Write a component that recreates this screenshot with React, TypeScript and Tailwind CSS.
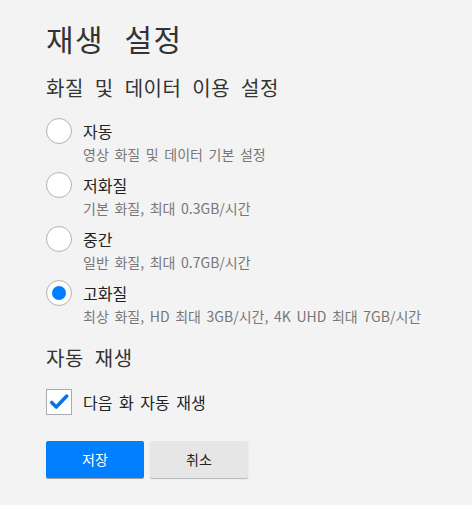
import { useState } from "react";

const qualities = [
  { id: "auto", label: "자동", desc: "영상 화질 및 데이터 기본 설정" },
  { id: "low", label: "저화질", desc: "기본 화질, 최대 0.3GB/시간" },
  { id: "medium", label: "중간", desc: "일반 화질, 최대 0.7GB/시간" },
  {
    id: "high",
    label: "고화질",
    desc: "최상 화질, HD 최대 3GB/시간, 4K UHD 최대 7GB/시간",
  },
];

export default function App() {
  const [quality, setQuality] = useState("high");
  const [autoplay, setAutoplay] = useState(true);

  return (
    <div
      className="min-h-screen bg-[#f3f3f3] pl-[46px] pt-[18px] text-[#333]"
      style={{ fontFamily: '"Noto Sans CJK KR", "Noto Sans", sans-serif' }}
    >
      <h1 className="text-[30px] leading-[40px] font-normal tracking-[1.5px] [word-spacing:12px]">
        재생 설정
      </h1>

      <h2 className="mt-[16px] text-[20px] leading-[28px] font-normal tracking-[0.5px] [word-spacing:6px]">
        화질 및 데이터 이용 설정
      </h2>

      <div className="mt-4">
        {qualities.map((q) => (
          <label
            key={q.id}
            className="flex h-[54px] cursor-pointer items-start"
          >
            <span
              onClick={() => setQuality(q.id)}
              className="flex h-[26px] w-[26px] shrink-0 items-center justify-center rounded-full border border-[#b3b3b3] bg-white"
            >
              {quality === q.id && (
                <span className="h-[14px] w-[14px] rounded-full bg-[#0080ff]" />
              )}
            </span>
            <span className="ml-[11px] flex flex-col">
              <span className="text-[16px] leading-[26px] text-[#222]">
                {q.label}
              </span>
              <span className="text-[14px] leading-[20px] text-[#777] [word-spacing:2.5px]">
                {q.desc}
              </span>
            </span>
          </label>
        ))}
      </div>

      <h2 className="mt-[10px] text-[20px] leading-[28px] font-normal tracking-[0.5px] [word-spacing:6px]">
        자동 재생
      </h2>

      <div
        className="mt-[17px] flex cursor-pointer items-center"
        onClick={() => setAutoplay(!autoplay)}
      >
        <span className="flex h-[26px] w-[26px] items-center justify-center border border-[#aaa] bg-white">
          {autoplay && (
            <svg viewBox="0 0 24 24" className="h-[22px] w-[22px]">
              <path
                d="M4 12.5l5 5L20.5 5.5"
                fill="none"
                stroke="#0a73e0"
                strokeWidth="3.8"
                strokeLinecap="round"
                strokeLinejoin="round"
              />
            </svg>
          )}
        </span>
        <span className="ml-[11px] text-[16px] leading-[26px] text-[#222] [word-spacing:3px]">
          다음 화 자동 재생
        </span>
      </div>

      <div className="mt-[26px] flex gap-[6px]">
        <button className="h-[37px] w-[98px] rounded-[2px] bg-[#0080ff] text-[14px] text-white shadow-[0_1px_0_rgba(0,0,0,0.35)]">
          저장
        </button>
        <button className="h-[37px] w-[98px] rounded-[2px] bg-[#e6e6e6] text-[14px] text-[#222] shadow-[0_1px_1px_rgba(0,0,0,0.25)]">
          취소
        </button>
      </div>
    </div>
  );
}
